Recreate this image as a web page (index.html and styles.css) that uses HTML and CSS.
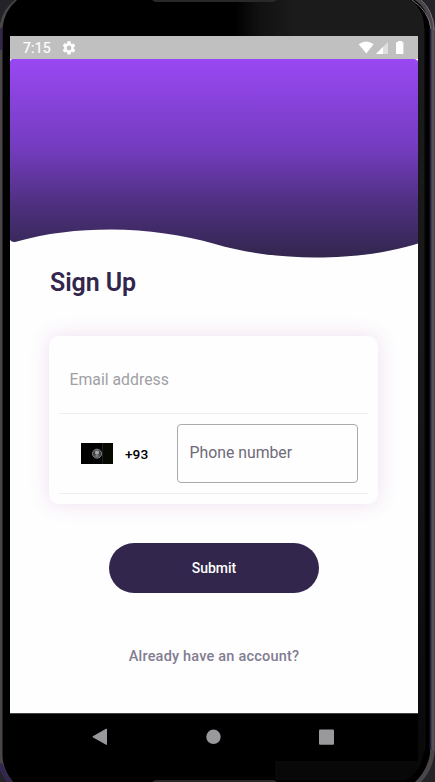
FILE: index.html
```html
<!DOCTYPE html>
<html lang="en">
<head>
<meta charset="utf-8">
<title>Sign Up</title>
<link rel="stylesheet" href="styles.css">
</head>
<body>
<div class="device">
  <svg class="bezel" width="435" height="782" viewBox="0 0 435 782" aria-hidden="true">
    <defs>
      <linearGradient id="rim" x1="0" x2="1"><stop offset="0" stop-color="#111"/><stop offset=".2" stop-color="#000"/><stop offset=".5" stop-color="#000"/><stop offset=".7" stop-color="#33274d"/><stop offset=".8" stop-color="#555257"/><stop offset="1" stop-color="#55515a"/></linearGradient>
      <linearGradient id="sheen" x1="0" x2="1"><stop offset="0" stop-color="#000"/><stop offset=".4" stop-color="#111"/><stop offset="1" stop-color="#1b1b1b"/></linearGradient>
      <linearGradient id="side" x1="0" y1="0" x2="0" y2="1"><stop offset="0" stop-color="#1b1b1b"/><stop offset=".5" stop-color="#171717"/><stop offset="1" stop-color="#080808"/></linearGradient>
    </defs>
    <rect width="435" height="782" fill="#242327"/>
    <path d="M0 24Q3 9 15 0H420Q434 11 435 30V750Q433 770 421 782H12Q3 774 0 762Z" fill="#494549"/>
    <path d="M2.500 28Q4 11 17 0H415Q427 8 430 26V754Q427 771 415 782H13Q3 770 2.500 756Z" fill="#000"/>
    <rect x="235" y="0" width="60" height="36" fill="url(#sheen)"/>
    <path d="M295 0H411Q424 10 424 27V36H295Z" fill="#1b1b1b"/>
    <path d="M418 36H424V750Q422 772 405 780H275V761H418Z" fill="url(#side)"/>
    <path d="M275 761H418L412 774L405 780H275Z" fill="#080808"/>
    <rect x="424" y="28" width="10" height="722" fill="url(#rim)"/>
    <path d="M412 0Q429 11 431 29M421 0Q433 10 434 30" fill="none" stroke="#77727b" stroke-width="1"/>
    <path d="M0 764Q4 775 10 782" fill="none" stroke="#33274d" stroke-width="5"/>
    <path d="M1 28V50" stroke="#33274d" stroke-width="2"/>
    <path d="M152 0H277L274 2H155Z M152 782L155 780H274L277 782Z" fill="#292929"/>
  </svg>
  <div class="screen">
    <header class="status">
      <span class="time">7:15</span>
      <svg class="gear" width="16" height="16" viewBox="0 0 24 24"><path fill="#fff" d="M19.14 12.94c.04-.3.06-.61.06-.94s-.02-.64-.07-.94l2.03-1.58a.49.49 0 0 0 .12-.61l-1.92-3.32a.49.49 0 0 0-.59-.22l-2.39.96a7 7 0 0 0-1.62-.94l-.36-2.54A.48.48 0 0 0 13.92 2h-3.84a.48.48 0 0 0-.48.41l-.35 2.54a7.4 7.4 0 0 0-1.63.94l-2.39-.96a.48.48 0 0 0-.59.22L2.72 8.47a.48.48 0 0 0 .12.61l2.03 1.58a6 6 0 0 0 0 2.28l-2.03 1.58a.49.49 0 0 0-.12.61l1.92 3.32c.12.22.37.29.59.22l2.39-.96c.5.38 1.03.7 1.62.94l.36 2.54c.05.24.24.41.48.41h3.84c.24 0 .44-.17.47-.41l.36-2.54a7.4 7.4 0 0 0 1.62-.94l2.39.96c.22.08.47 0 .59-.22l1.92-3.32a.48.48 0 0 0-.12-.61ZM12 15.600a3.600 3.600 0 1 1 0-7.200 3.600 3.600 0 0 1 0 7.200Z"/></svg>
      <svg class="signals" width="47" height="14" viewBox="0 0 47 14"><path fill="#fff" d="M.7 3.200Q8 -2.400 15.600 3.200L8.300 12.400Z"/><path fill="#dfdfe0" d="M18 13L30 .8V13Z"/><path fill="#fff" d="M18 13L25 5.900V13Z"/><path fill="#fff" d="M40 .1h4v1.200h1.400v11.700H38V1.300h2Z"/></svg>
    </header>
    <main class="content">
      <svg class="wave" width="408" height="200" viewBox="0 0 408 200" aria-hidden="true">
        <defs><linearGradient id="violet" x1="0" y1="0" x2="0" y2="1"><stop offset="0" stop-color="#9948f3"/><stop offset=".45" stop-color="#743cbf"/><stop offset=".73" stop-color="#4e3080"/><stop offset="1" stop-color="#32264d"/></linearGradient></defs>
        <path fill="url(#violet)" d="M0 2L2 0H405L408 2V184.500C388 191 353 198.500 305 198.500C272 198.500 235 194 205 185C174 176 137 170.500 101 170.500C68 170.500 36 174 5 183Q2 183.500 0 181Z"/>
      </svg>
      <h1 class="title">Sign Up</h1>
      <form class="card">
        <div class="row email">Email address</div>
        <div class="row phone">
          <svg class="flag" width="32" height="21" viewBox="0 0 32 21"><path d="M0 0H21V21H0Z"/><path d="M21 0H32V21H21Z" fill="#050900"/><path d="M21.500 0V21" stroke="#202020"/><circle cx="16" cy="10.700" r="4.500" fill="#3c3c40" stroke="#85858b"/><path d="M14.500 8h3v3h-3zM13.500 13h5M16 11v3" fill="#aaa" stroke="#a0a0a5" stroke-width=".8"/></svg>
          <span class="code">+93</span>
          <div class="field">Phone number</div>
        </div>
      </form>
      <button class="submit">Submit</button>
      <a class="login">Already have an account?</a>
    </main>
    <nav class="nav">
      <svg width="408" height="47" viewBox="0 0 408 47" fill="#99989b"><path d="M96.500 15V30.500L82.800 22.800Z" stroke="#99989b" stroke-linejoin="round"/><circle cx="203.500" cy="22.800" r="7.200"/><rect x="309" y="15.400" width="15" height="15.300" rx="1"/></svg>
    </nav>
  </div>
</div>
</body>
</html>
```
FILE: styles.css
```css
* { box-sizing: border-box; }
body { margin: 0; font-family: Roboto, "Liberation Sans", sans-serif; }
.device { position: relative; width: 435px; height: 782px; padding: 36px 0 0 10px; overflow: hidden; }
.bezel { position: absolute; inset: 0; }
.screen { position: relative; width: 408px; height: 725px; display: flex; flex-direction: column; }
.status { flex: none; height: 23px; background: #c0c0c0; display: flex; align-items: center; padding: 0 13px; color: #fff; }
.time { width: 38px; font-size: 14px; font-weight: 400; line-height: 23px; padding-top: 1px; letter-spacing: .2px; -webkit-text-stroke: .2px #fff; }
.signals { margin-left: auto; }
.content { flex: none; height: 655px; background: #fefefe; display: flex; flex-direction: column; border-bottom: 1px solid #444; }
.wave { display: block; flex: none; }
.title { margin: 9px 0 0 40px; font-size: 25px; line-height: 30px; font-weight: 600; color: #32264d; letter-spacing: -.1px; }
.card { width: 329px; height: 168px; margin: 38px 0 0 39px; padding: 0 10px; border-radius: 10px; background: #fefefe; box-shadow: 0 0 20px rgba(160, 60, 170, .17); }
.row { border-bottom: 1px solid #eee; }
.email { height: 78px; padding: 34px 10px 0 10.5px; font-size: 15.800px; line-height: 19px; color: #a0a0a5; }
.phone { height: 80px; display: flex; align-items: center; padding: 0 10px 0 22px; }
.flag { flex: none; }
.code { margin-left: 12px; font-size: 13.700px; font-weight: 500; color: #000; }
.field { flex: none; width: 181px; height: 59px; margin-left: auto; padding-left: 11.5px; border: 1px solid #aaa; border-radius: 4px; font-size: 15.800px; line-height: 56px; color: #6e6a78; }
.submit { width: 210px; height: 50px; margin: 39px auto 0 99px; border: 0; border-radius: 25px; background: #32264d; color: #fff; font: 500 14px/50px Roboto, sans-serif; padding: 0; }
.login { margin: 54px 0 0; text-align: center; font-size: 14.500px; line-height: 19px; font-weight: 500; letter-spacing: .2px; color: #827c91; }
.nav { flex: none; height: 47px; background: #000; }
.nav svg { display: block; }
```
